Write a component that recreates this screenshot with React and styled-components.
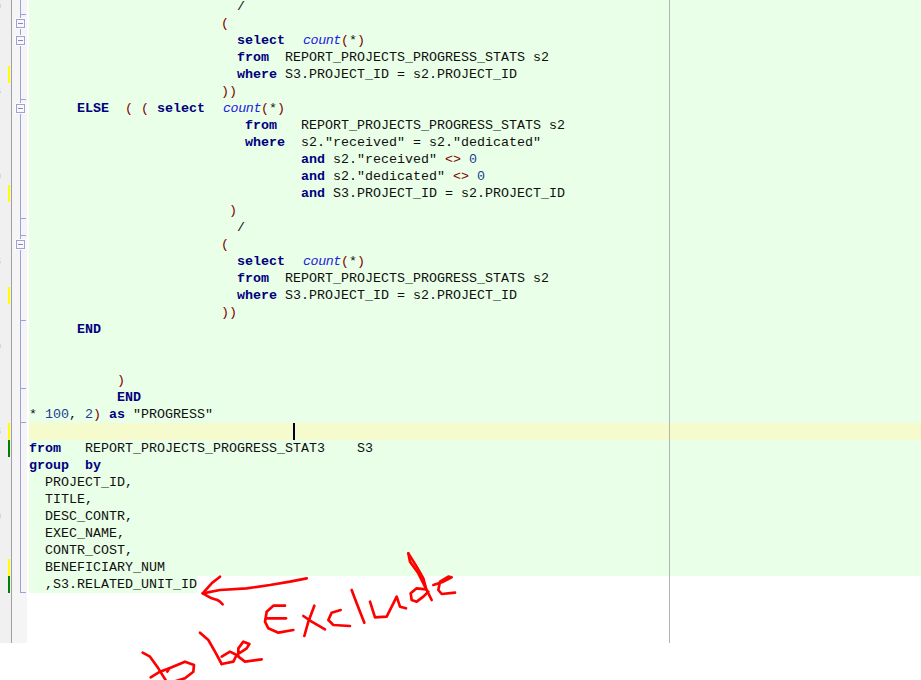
import React from 'react';
import styled, { createGlobalStyle } from 'styled-components';

const GlobalStyle = createGlobalStyle`
  html, body {
    margin: 0;
    padding: 0;
    background: #fff;
    overflow: hidden;
  }
`;

const Page = styled.div`
  position: relative;
  width: 921px;
  height: 680px;
  overflow: hidden;
`;

const Editor = styled.div`
  position: relative;
  margin-top: -2px;
  height: 645px;
  font-family: "Liberation Mono", "Courier New", monospace;
  font-size: 13.333px;
  line-height: 17px;
`;

const PrintMargin = styled.div`
  position: absolute;
  left: 669px;
  top: 0;
  bottom: 0;
  width: 1px;
  background: #b4b4b4;
`;

const Row = styled.div`
  display: flex;
  height: ${(props) => props.$height || 17}px;
`;

const ChangeMargin = styled.div`
  flex: none;
  display: flex;
  justify-content: space-between;
  width: 11px;
  background: #f0f0f0;
  border-right: 1px solid #a0a0a0;
  overflow: hidden;
`;

const LineDigit = styled.span`
  margin-left: -4px;
  width: 6px;
  font-family: "Liberation Sans", Arial, sans-serif;
  font-size: 9px;
  color: #c4c4e8;
`;

const ChangeMark = styled.span`
  width: 2px;
  margin-left: auto;
  margin-right: 1px;
  background: ${(props) => (props.$kind === 'saved' ? '#008000' : '#ffff00')};
`;

const FoldCell = styled.div`
  position: relative;
  flex: none;
  width: 15px;
  background: #f5f5f5;

  &::before {
    content: '';
    display: ${(props) => (props.$open ? 'block' : 'none')};
    position: absolute;
    left: 8px;
    top: 0;
    bottom: 0;
    width: 1px;
    background: #a0a0dc;
  }

  &::after {
    content: '';
    display: ${(props) => (props.$kind === 'tick' || props.$kind === 'end' ? 'block' : 'none')};
    position: absolute;
    left: 9px;
    bottom: 0;
    width: 5px;
    height: 1px;
    background: #a0a0dc;
  }
`;

const FoldBox = styled.span`
  position: absolute;
  z-index: 1;
  left: 4px;
  top: 4px;
  box-sizing: border-box;
  width: 9px;
  height: 9px;
  background: #f8f8f8;
  border: 1px solid #a0a0dc;
  box-shadow: 0 0 0 1px #fcfcfc;

  &::after {
    content: '';
    position: absolute;
    left: 1px;
    top: 3px;
    width: 5px;
    height: 1px;
    background: #8c8ca8;
  }
`;

const GutterGap = styled.div`
  flex: none;
  width: 2px;
  background: #fff;
`;

const Code = styled.pre`
  flex: 1;
  margin: 0;
  font: inherit;
  white-space: pre;
  color: #101010;
  background: ${(props) => props.$bg || '#eaffe8'};
`;

const Fragment = styled.span`
  display: inline-block;
  height: 17px;
  background: #eaffe8;
`;

const Caret = styled.span`
  display: inline-block;
  vertical-align: top;
  width: 2px;
  height: 17px;
  background: #000020;
`;

const Keyword = styled.span`
  font-weight: bold;
  color: #000080;
`;

// the italic face sits a little right of its cell in the reference
const Func = styled.span`
  margin-left: 2px;
  letter-spacing: -0.4px;
  font-style: italic;
  color: #2020e0;
`;

const Operator = styled.span`
  color: #800000;
`;

const Num = styled.span`
  color: #204090;
`;

const Overlay = styled.svg`
  position: absolute;
  left: 130px;
  top: 540px;
  fill: none;
  stroke: #fe0000;
  stroke-width: 8;
  stroke-linecap: round;
  stroke-linejoin: round;
`;

const LINES = [
  '                          /',
  '                        (',
  '                          select  count(*)',
  '                          from  REPORT_PROJECTS_PROGRESS_STATS s2',
  '                          where S3.PROJECT_ID = s2.PROJECT_ID',
  '                        ))',
  '      ELSE  ( ( select  count(*)',
  '                           from   REPORT_PROJECTS_PROGRESS_STATS s2',
  '                           where  s2."received" = s2."dedicated"',
  '                                  and s2."received" <> 0',
  '                                  and s2."dedicated" <> 0',
  '                                  and S3.PROJECT_ID = s2.PROJECT_ID',
  '                         )',
  '                          /',
  '                        (',
  '                          select  count(*)',
  '                          from  REPORT_PROJECTS_PROGRESS_STATS s2',
  '                          where S3.PROJECT_ID = s2.PROJECT_ID',
  '                        ))',
  '      END',
  '',
  '',
  '           )',
  '           END',
  '* 100, 2) as "PROGRESS"',
  '',
  'from   REPORT_PROJECTS_PROGRESS_STAT3    S3',
  'group  by',
  '  PROJECT_ID,',
  '  TITLE,',
  '  DESC_CONTR,',
  '  EXEC_NAME,',
  '  CONTR_COST,',
  '  BENEFICIARY_NUM',
  '  ,S3.RELATED_UNIT_ID',
];

const CHANGES = { 4: 'edited', 11: 'edited', 17: 'edited', 25: 'edited', 26: 'saved', 33: 'edited', 34: 'saved' };
const FOLDS = {
  0: 'tick',
  1: 'box',
  2: 'box',
  5: 'tick',
  6: 'box',
  12: 'tick',
  13: 'tick',
  14: 'box',
  18: 'tick',
  22: 'tick',
  24: 'tick',
  34: 'end',
};
const ACTIVE_LINE = 25;
const LAST_LINE = LINES.length - 1;

const TOKENS = /(\b(?:select|from|where|and|as|ELSE|END|group|by)\b)|(\bcount\b)|(<>|[()])|(\b\d+\b)/g;

// splits a line of sql into coloured spans
const highlight = (line) => {
  const parts = [];
  let last = 0;
  for (const m of line.matchAll(TOKENS)) {
    if (m.index > last) parts.push(line.slice(last, m.index));
    if (m[1]) parts.push(<Keyword key={m.index}>{m[0]}</Keyword>);
    else if (m[2]) parts.push(<Func key={m.index}>{m[0]}</Func>);
    else if (m[3]) parts.push(<Operator key={m.index}>{m[0]}</Operator>);
    else parts.push(<Num key={m.index}>{m[0]}</Num>);
    last = m.index + m[0].length;
  }
  parts.push(line.slice(last));
  return parts;
};

const STROKES = [
  // arrow
  '530,115 480,125 420,135 350,145 270,150 218,160',
  '270,110 245,130 218,160 245,175 262,180 270,185 278,193',
  // to
  '38,338 60,350 85,385 108,422',
  '62,412 90,395 118,385',
  '112,395 118,385 165,365 192,375 190,395 165,415 135,424',
  // be
  '210,278 235,300 255,335 275,372',
  '275,350 300,335 320,345 310,365 275,372',
  '320,345 350,325 358,312 340,305 325,325 325,350 345,365 395,358',
  // Exclude
  '465,197 430,197 410,215 405,245 415,265 445,278 490,270',
  '410,235 468,235',
  '520,228 545,245 585,268',
  '553,197 535,245 523,288',
  '632,210 605,218 595,240 610,255 660,258',
  '665,150 680,190 703,248',
  '720,185 735,232 770,230 790,190 800,170 810,200 828,205',
  '835,40 840,65 865,100 885,140 905,180',
  '835,40 860,80 880,115 888,145',
  '888,148 860,145 842,160 845,180 860,185 880,170 895,155',
  '910,135 940,125 965,112 955,110 930,125 925,150 935,162 975,158',
];

const Gutter = ({ index }) => {
  const fold = FOLDS[index];
  return (
    <>
      <ChangeMargin>
        {index % 5 === 0 && <LineDigit>{index % 10 === 0 ? '0' : '5'}</LineDigit>}
        {CHANGES[index] && <ChangeMark $kind={CHANGES[index]} />}
      </ChangeMargin>
      <FoldCell $open $kind={fold}>
        {fold === 'box' && <FoldBox />}
      </FoldCell>
      <GutterGap />
    </>
  );
};

const CodeLine = ({ line, index }) => {
  if (index === ACTIVE_LINE) {
    return (
      <Code $bg="#f6fbcd">
        {' '.repeat(33)}
        <Caret />
      </Code>
    );
  }
  if (index === LAST_LINE) {
    return (
      <Code $bg="#fff">
        <Fragment>{highlight(line)}</Fragment>
      </Code>
    );
  }
  return <Code>{highlight(line)}</Code>;
};

const App = () => {
  return (
    <Page>
      <GlobalStyle />
      <Editor>
        {LINES.map((line, i) => (
          <Row key={i}>
            <Gutter index={i} />
            <CodeLine line={line} index={i} />
          </Row>
        ))}
        <Row $height={50}>
          <ChangeMargin />
          <FoldCell />
          <GutterGap />
          <Code $bg="#fff" />
        </Row>
        <PrintMargin />
      </Editor>
      <Overlay width="340" height="140" viewBox="0 0 1020 420">
        {STROKES.map((points) => (
          <polyline key={points} points={points} />
        ))}
      </Overlay>
    </Page>
  );
};

export default App;
